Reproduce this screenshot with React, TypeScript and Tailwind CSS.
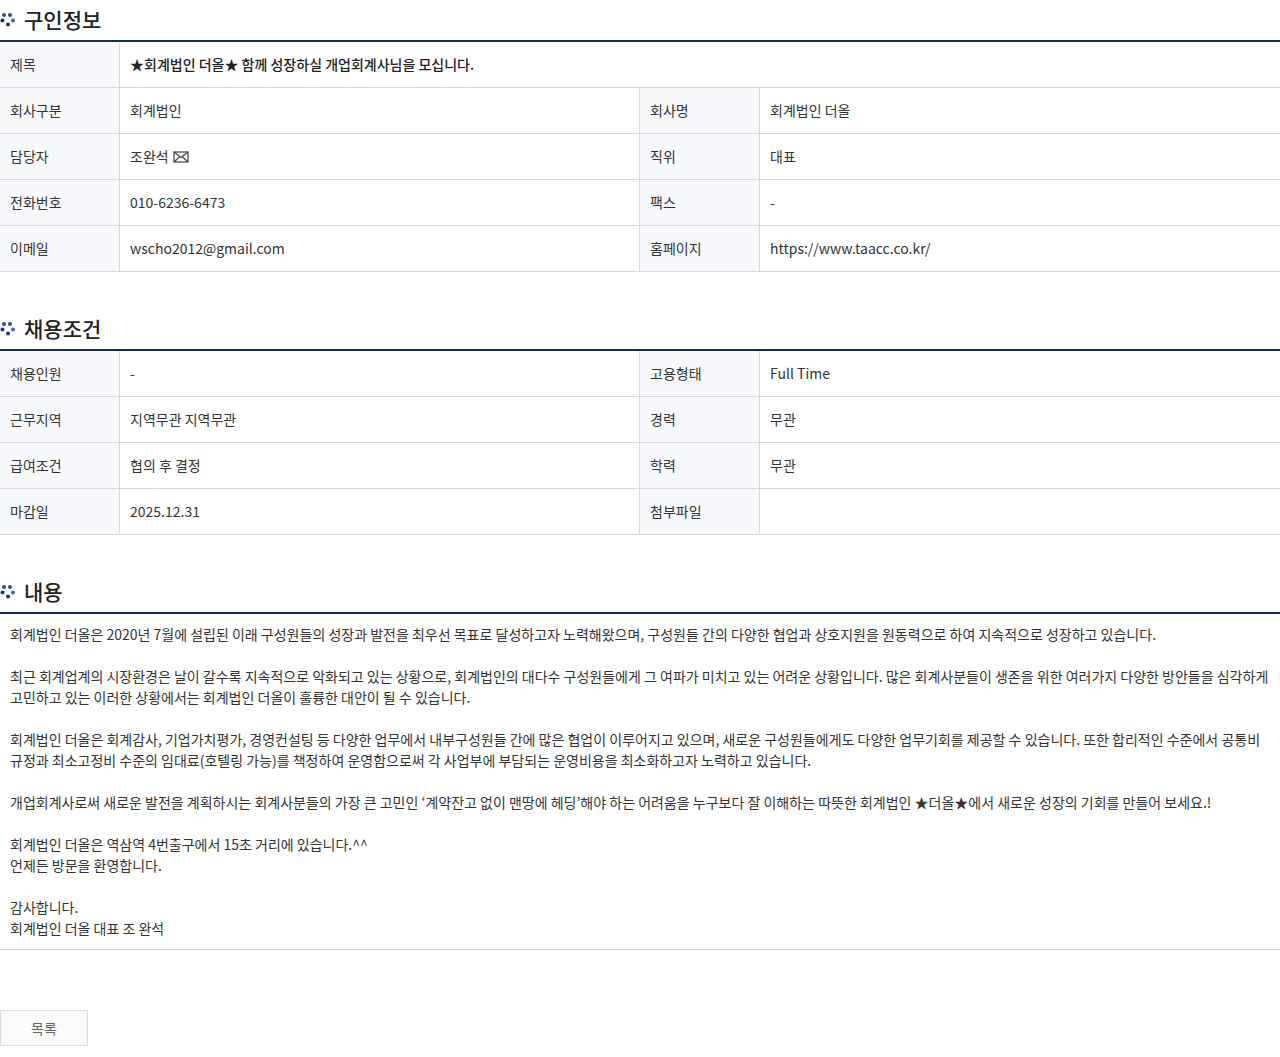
import React from 'react'

const font = { fontFamily: '"Noto Sans CJK KR", "Noto Sans", sans-serif' }

function Dots() {
  return (
    <svg width="16" height="16" viewBox="0 0 16 16" className="shrink-0">
      <circle cx="4" cy="3" r="2" fill="#2b4a9a" />
      <circle cx="10" cy="3" r="2" fill="#2b4a9a" />
      <circle cx="2.5" cy="8.5" r="2" fill="#1d3470" />
      <circle cx="13" cy="8.5" r="2" fill="#3f63b8" />
      <circle cx="8" cy="12.5" r="2" fill="#1d3470" />
    </svg>
  )
}

function Heading({ title }: { title: string }) {
  return (
    <div className="flex items-center gap-2 h-[42px] border-b-2 border-[#1b2a5c]">
      <Dots />
      <h2 className="text-[21px] font-medium text-[#222]">{title}</h2>
    </div>
  )
}

type Row = [string, React.ReactNode, string?, React.ReactNode?]

function Table({ rows }: { rows: Row[] }) {
  return (
    <div>
      {rows.map((r, i) => (
        <div key={i} className="flex h-[46px] border-b border-[#d9d9d9] text-[14px] text-[#333]">
          <div className="w-[120px] shrink-0 bg-[#f8f9fd] border-r border-[#d9d9d9] flex items-center px-[10px]">{r[0]}</div>
          <div className={`${r[2] ? 'w-[520px] border-r border-[#d9d9d9]' : 'flex-1'} flex items-center px-[10px]`}>{r[1]}</div>
          {r[2] && (
            <>
              <div className="w-[120px] shrink-0 bg-[#f8f9fd] border-r border-[#d9d9d9] flex items-center px-[10px]">{r[2]}</div>
              <div className="flex-1 flex items-center px-[10px]">{r[3]}</div>
            </>
          )}
        </div>
      ))}
    </div>
  )
}

export default function App() {
  return (
    <div className="w-[1280px] bg-white text-[#333]" style={font}>
      <Heading title="구인정보" />
      <Table
        rows={[
          ['제목', <span className="font-medium text-[#222]">★회계법인 더올★ 함께 성장하실 개업회계사님을 모십니다.</span>],
          ['회사구분', '회계법인', '회사명', '회계법인 더올'],
          ['담당자', <span className="flex items-center gap-0.5">조완석<svg width="16" height="12" viewBox="0 0 16 12" className="ml-0.5"><rect x="1" y="1" width="14" height="10" fill="none" stroke="#444" strokeWidth="1.2" /><path d="M1 1l7 5.5L15 1M1 11l5.5-5M15 11l-5.5-5" fill="none" stroke="#444" strokeWidth="1.2" /></svg></span>, '직위', '대표'],
          ['전화번호', '010-6236-6473', '팩스', '-'],
          ['이메일', 'wscho2012@gmail.com', '홈페이지', 'https://www.taacc.co.kr/'],
        ]}
      />
      <div className="mt-[37px]">
        <Heading title="채용조건" />
      </div>
      <Table
        rows={[
          ['채용인원', '-', '고용형태', 'Full Time'],
          ['근무지역', '지역무관 지역무관', '경력', '무관'],
          ['급여조건', '협의 후 결정', '학력', '무관'],
          ['마감일', '2025.12.31', '첨부파일', ''],
        ]}
      />
      <div className="mt-[37px]">
        <Heading title="내용" />
      </div>
      <div className="px-[10px] pt-[10px] pb-[10px] text-[14px] leading-[21px] text-[#333] border-b border-[#d0d0d0]">
        <p>회계법인 더올은 2020년 7월에 설립된 이래 구성원들의 성장과 발전을 최우선 목표로 달성하고자 노력해왔으며, 구성원들 간의 다양한 협업과 상호지원을 원동력으로 하여 지속적으로 성장하고 있습니다.</p>
        <br />
        <p>최근 회계업계의 시장환경은 날이 갈수록 지속적으로 악화되고 있는 상황으로, 회계법인의 대다수 구성원들에게 그 여파가 미치고 있는 어려운 상황입니다. 많은 회계사분들이 생존을 위한 여러가지 다양한 방안들을 심각하게 고민하고 있는 이러한 상황에서는 회계법인 더올이 훌륭한 대안이 될 수 있습니다.</p>
        <br />
        <p>회계법인 더올은 회계감사, 기업가치평가, 경영컨설팅 등 다양한 업무에서 내부구성원들 간에 많은 협업이 이루어지고 있으며, 새로운 구성원들에게도 다양한 업무기회를 제공할 수 있습니다. 또한 합리적인 수준에서 공통비 규정과 최소고정비 수준의 임대료(호텔링 가능)를 책정하여 운영함으로써 각 사업부에 부담되는 운영비용을 최소화하고자 노력하고 있습니다.</p>
        <br />
        <p>개업회계사로써 새로운 발전을 계획하시는 회계사분들의 가장 큰 고민인 ‘계약잔고 없이 맨땅에 헤딩’해야 하는 어려움을 누구보다 잘 이해하는 따뜻한 회계법인 ★더올★에서 새로운 성장의 기회를 만들어 보세요.!</p>
        <br />
        <p>회계법인 더올은 역삼역 4번출구에서 15초 거리에 있습니다.^^</p>
        <p>언제든 방문을 환영합니다.</p>
        <br />
        <p>감사합니다.</p>
        <p>회계법인 더올 대표 조 완석</p>
      </div>
      <div className="pt-[60px]">
        <button className="w-[88px] h-[36px] border border-[#ddd] bg-[#fafafa] text-[14px] text-[#666]">목록</button>
      </div>
    </div>
  )
}
